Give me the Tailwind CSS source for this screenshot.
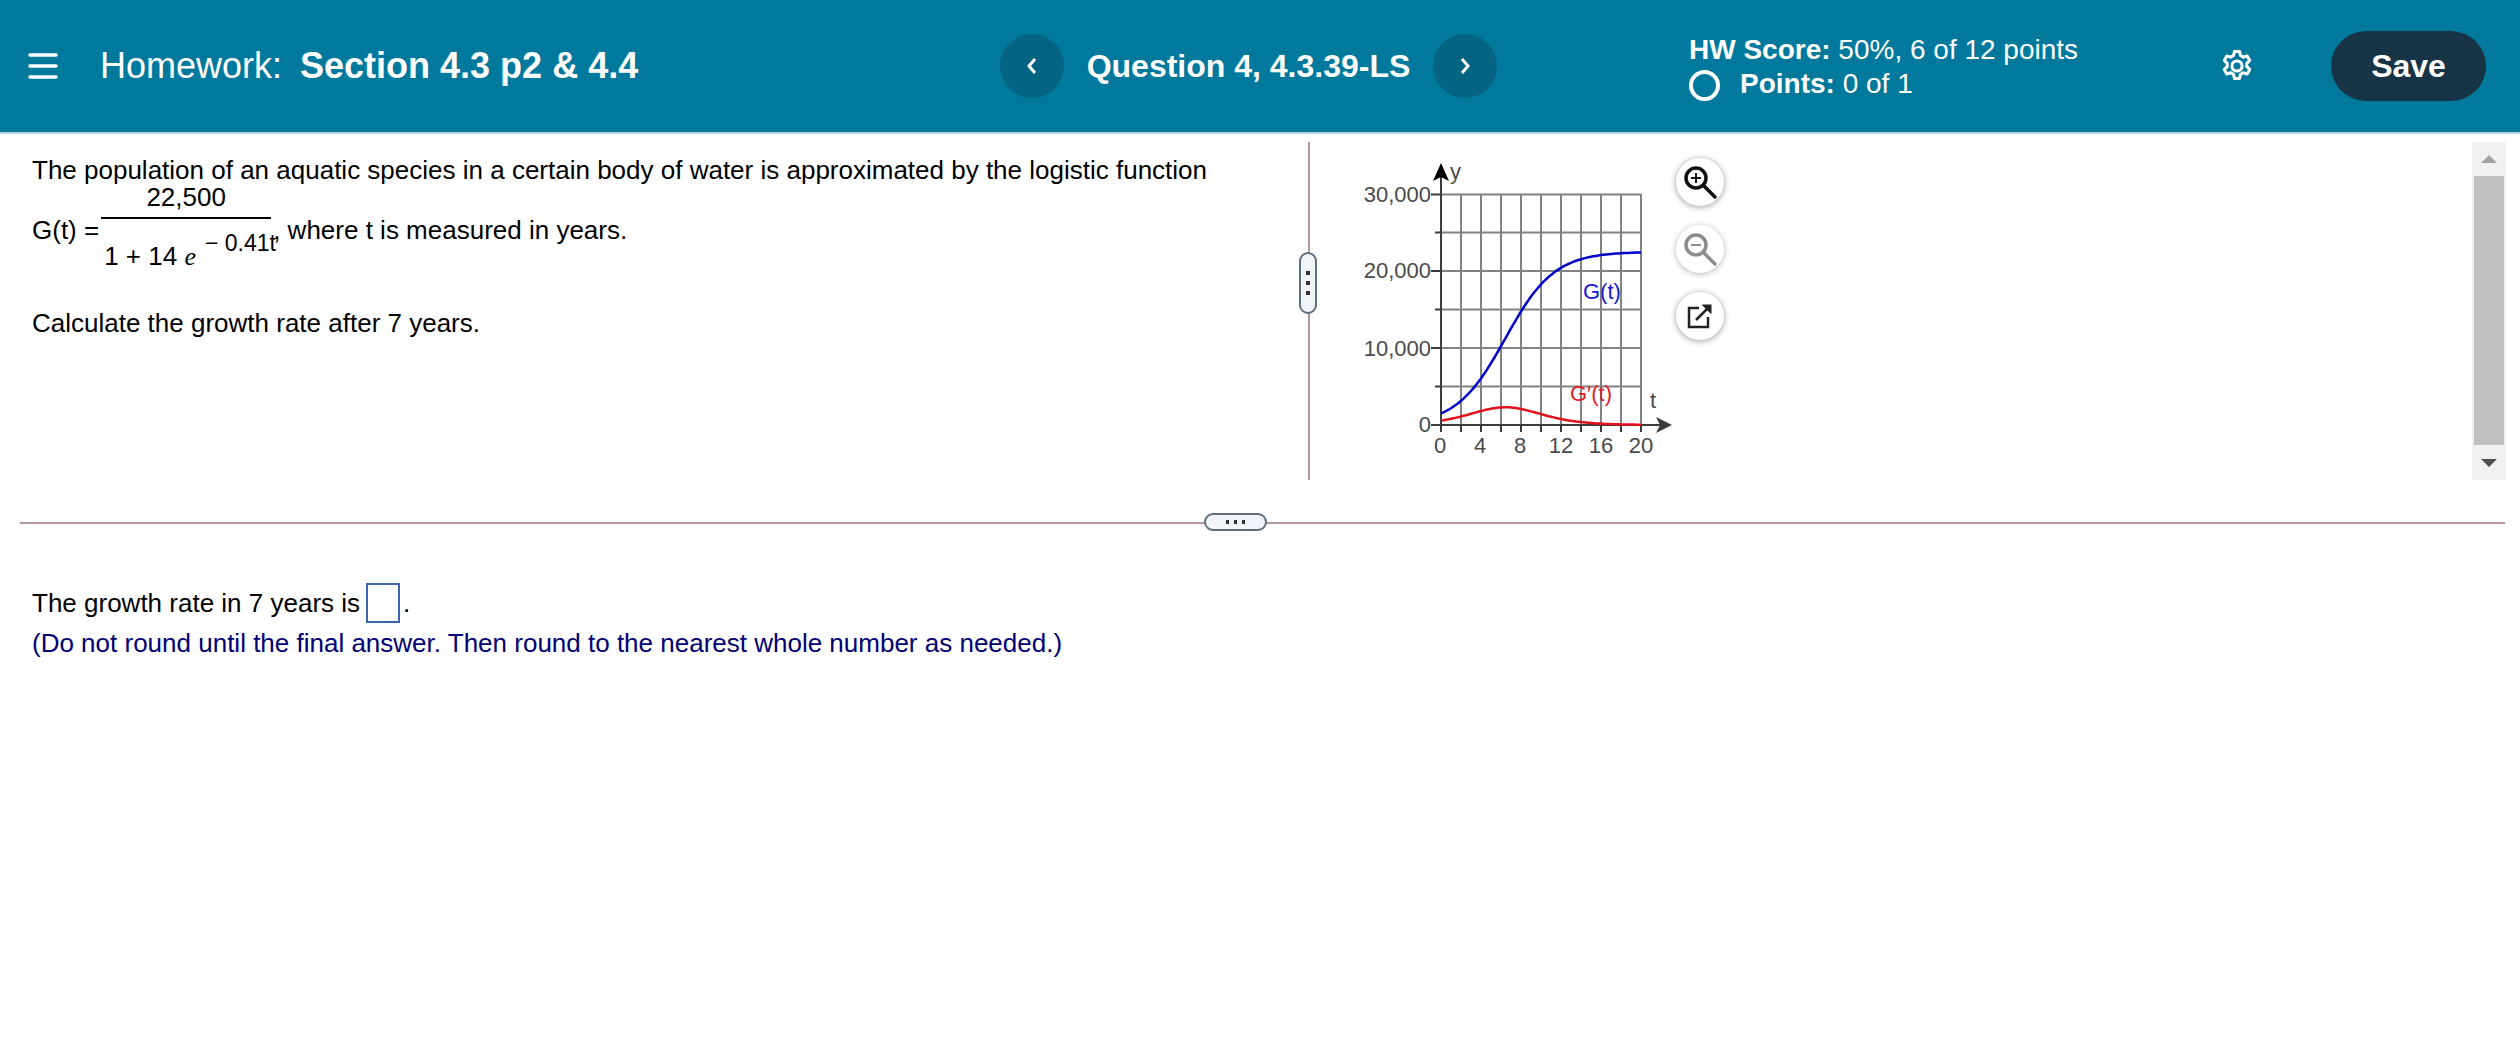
<!DOCTYPE html>
<html lang="en">
<head>
  <meta charset="UTF-8" />
  <title>Homework: Section 4.3 p2 &amp; 4.4</title>
  <script src="https://cdn.jsdelivr.net/npm/@tailwindcss/browser@4"></script>
</head>
<body class="bg-white text-black font-['Liberation_Sans',Arial,sans-serif] text-[26px] overflow-hidden">

  <!-- Top bar -->
  <header class="h-[134px] bg-[#00799c] border-b-2 border-[#b5d3df] text-white flex items-center">
    <svg class="w-[30px] h-[26px] ml-[28px]" viewBox="0 0 30 26" fill="none" stroke="#fff" stroke-width="3.5" stroke-linecap="round">
      <path d="M2 2h26M2 13h26M2 24h26" />
    </svg>
    <div class="ml-[42px] w-[900px] text-[36px] whitespace-nowrap">Homework:<span class="font-bold ml-[18px]">Section 4.3 p2 &amp; 4.4</span></div>

    <button class="w-[64px] h-[64px] rounded-full bg-[#056482] flex items-center justify-center">
      <svg class="w-[12px] h-[20px]" viewBox="0 0 12 20" fill="none" stroke="#fff" stroke-width="3"><path d="M9 3L3 10l6 7" /></svg>
    </button>
    <div class="w-[369px] text-center text-[32px] font-bold whitespace-nowrap">Question 4, 4.3.39-LS</div>
    <button class="w-[64px] h-[64px] rounded-full bg-[#056482] flex items-center justify-center">
      <svg class="w-[12px] h-[20px]" viewBox="0 0 12 20" fill="none" stroke="#fff" stroke-width="3"><path d="M3 3l6 7-6 7" /></svg>
    </button>

    <div class="ml-[192px] w-[530px] text-[28px] leading-[34px] pt-[2px] whitespace-nowrap">
      <div><span class="font-bold">HW Score:</span> 50%, 6 of 12 points</div>
      <div class="flex items-center">
        <span class="w-[31px] h-[31px] rounded-full border-[4px] border-white mr-[20px] mt-[2px]"></span>
        <span><span class="font-bold">Points:</span> 0 of 1</span>
      </div>
    </div>

    <svg class="w-[36px] h-[36px]" viewBox="0 0 24 24" fill="none" stroke="#fff" stroke-width="2" stroke-linejoin="round">
      <path d="M10.3 2.3h3.4l.6 2.7 1.9 1.1 2.6-.8 1.7 3-2 1.9v2.2l2 1.9-1.7 3-2.6-.8-1.9 1.1-.6 2.7h-3.4l-.6-2.7-1.9-1.1-2.6.8-1.7-3 2-1.9v-2.2l-2-1.9 1.7-3 2.6.8 1.9-1.1z" />
      <circle cx="12" cy="12" r="3.4" />
    </svg>
    <button class="ml-[76px] w-[155px] h-[70px] rounded-[35px] bg-[#173447] text-[32px] font-bold">Save</button>
  </header>

  <!-- Question and graph -->
  <section class="flex h-[338px] mt-[8px]">
    <div class="w-[1308px] pl-[32px] pt-[10px] shrink-0">
      <p class="leading-[36px]">The population of an aquatic species in a certain body of water is approximated by the logistic function</p>
      <div class="flex items-center h-[88px] mt-[-2px] whitespace-nowrap">
        <span>G(t) =</span>
        <span class="inline-flex flex-col items-center w-[170px] ml-[2px]">
          <span class="leading-[36px] pb-[2px]">22,500</span>
          <span class="w-full h-[2px] bg-black"></span>
          <span class="leading-[48px] w-full pl-[3px]">1 + 14 <i class="font-['Liberation_Serif',serif]">e</i><span class="text-[23px] ml-[9px] align-[14px]">− 0.41t</span></span>
        </span>
        <span class="ml-[2px]">, where t is measured in years.</span>
      </div>
      <p class="leading-[36px] mt-[31px]">Calculate the growth rate after 7 years.</p>
    </div>

    <!-- Vertical splitter -->
    <div class="relative w-[2px] bg-[#b795a4] shrink-0">
      <div class="absolute left-[-9px] top-[110px] w-[18px] h-[62px] rounded-[9px] border-2 border-[#5f6f7f] bg-[#f1f4f8] flex flex-col items-center justify-center gap-[6px]">
        <span class="w-[4px] h-[4px] bg-[#333]"></span>
        <span class="w-[4px] h-[4px] bg-[#333]"></span>
        <span class="w-[4px] h-[4px] bg-[#333]"></span>
      </div>
    </div>

    <!-- Graph -->
    <svg class="ml-[40px] mt-[8px] shrink-0" width="330" height="310" viewBox="0 0 330 310" font-family="Liberation Sans, Arial, sans-serif" font-size="22" fill="#4a4a4a">
      <g id="grid" stroke="#828282" stroke-width="2" fill="none">
        <path d="M111 44V275M131 44V275M151 44V275M171 44V275M191 44V275M211 44V275M231 44V275M251 44V275M271 44V275M291 44V275" />
        <path d="M91 44.5H291M91 82.5H291M91 121H291M91 159.5H291M91 198H291M91 236.5H291" />
      </g>
      <g stroke="#3c3c3c" stroke-width="2" fill="none">
        <path d="M91 24V282M81 44.5H91M85 82.5H91M81 121H91M85 159.5H91M81 198H91M85 236.5H91M81 275H314" />
        <path d="M111 275v7M131 275v7M151 275v7M171 275v7M191 275v7M211 275v7M231 275v7M251 275v7M271 275v7M291 275v7" />
      </g>
      <path d="M91 13L99 31L91 27L83 31Z" fill="#000" />
      <path d="M322 275L306 267L310 275L306 283Z" fill="#3c3c3c" />
      <path id="g-curve" fill="none" stroke="#0000c8" stroke-width="2.5" />
      <path id="gp-curve" fill="none" stroke="#e0101c" stroke-width="2.5" />
      <text x="100" y="29">y</text>
      <text x="300" y="258">t</text>
      <text x="233" y="149" fill="#1a1ad0">G(t)</text>
      <text x="220" y="251" fill="#e0202a">G′(t)</text>
      <g text-anchor="end">
        <text x="81" y="52">30,000</text>
        <text x="81" y="128">20,000</text>
        <text x="81" y="206">10,000</text>
        <text x="81" y="282">0</text>
      </g>
      <g text-anchor="middle">
        <text x="90" y="303">0</text>
        <text x="130" y="303">4</text>
        <text x="170" y="303">8</text>
        <text x="211" y="303">12</text>
        <text x="251" y="303">16</text>
        <text x="291" y="303">20</text>
      </g>
    </svg>

    <!-- Graph tools -->
    <div class="ml-[-4px] mt-[16px] flex flex-col gap-[19px] shrink-0">
      <button class="w-[48px] h-[48px] rounded-full bg-white shadow-[0_1px_6px_rgba(0,0,0,0.4)] flex items-center justify-center">
        <svg class="w-[36px] h-[36px]" viewBox="0 0 36 36" fill="none" stroke="#111" stroke-width="3.5">
          <circle cx="14" cy="14" r="10" /><path d="M22 22l11 11" stroke-linecap="round" /><path d="M9 14h10M14 9v10" stroke-width="2" />
        </svg>
      </button>
      <button class="w-[48px] h-[48px] rounded-full bg-white shadow-[0_1px_6px_rgba(0,0,0,0.3)] flex items-center justify-center">
        <svg class="w-[36px] h-[36px]" viewBox="0 0 36 36" fill="none" stroke="#8c8c8c" stroke-width="3.5">
          <circle cx="14" cy="14" r="10" /><path d="M22 22l11 11" stroke-linecap="round" /><path d="M9 14h10" stroke-width="2" />
        </svg>
      </button>
      <button class="w-[48px] h-[48px] rounded-full bg-white shadow-[0_1px_6px_rgba(0,0,0,0.4)] flex items-center justify-center">
        <svg class="w-[26px] h-[26px]" viewBox="0 0 26 26" fill="none" stroke="#222" stroke-width="2.5">
          <path d="M12 5H2v19h19V14" /><path d="M9 17L22 4" /><path d="M15 2h9v9" fill="#222" stroke="none" />
          <path d="M15 1.5h9.5V11z" fill="#222" stroke="none" />
        </svg>
      </button>
    </div>

    <!-- Scrollbar -->
    <div class="ml-auto mr-[14px] w-[34px] bg-[#f1f1f1] flex flex-col items-center shrink-0">
      <div class="h-[34px] flex items-center justify-center">
        <span class="w-0 h-0 border-x-[8px] border-x-transparent border-b-[8px] border-b-[#a3a3a3]"></span>
      </div>
      <div class="w-[30px] flex-1 bg-[#c1c1c1]"></div>
      <div class="h-[35px] flex items-center justify-center">
        <span class="w-0 h-0 border-x-[8px] border-x-transparent border-t-[8px] border-t-[#505050]"></span>
      </div>
    </div>
  </section>

  <!-- Horizontal splitter -->
  <div class="relative h-[2px] ml-[20px] mr-[15px] mt-[42px] bg-[#b795a4]">
    <div class="absolute left-[1184px] top-[-9px] w-[63px] h-[18px] rounded-[9px] border-2 border-[#5f6f7f] bg-[#f1f4f8] flex items-center justify-center gap-[5px]">
      <span class="w-[3px] h-[4px] bg-[#333]"></span>
      <span class="w-[3px] h-[4px] bg-[#333]"></span>
      <span class="w-[3px] h-[4px] bg-[#333]"></span>
    </div>
  </div>

  <!-- Answer -->
  <section class="pl-[32px] pt-[59px]">
    <p class="flex items-center h-[40px]">The growth rate in 7 years is<span class="w-[34px] h-[40px] border-2 border-[#3b66ad] ml-[6px] mr-[3px]"></span>.</p>
    <p class="mt-[2px] leading-[36px] text-[#000073]">(Do not round until the final answer. Then round to the nearest whole number as needed.)</p>
  </section>

  <script>
    // G(t) = 22500 / (1 + 14 e^(-0.41t)) on the graph's scale
    const sx = t => 91 + t * 10;
    const sy = v => 275 - v * 231 / 30000;
    let g = '', gp = '';
    for (let t = 0; t <= 20; t += 0.25) {
      const val = 22500 / (1 + 14 * Math.exp(-0.41 * t));
      const rate = 0.41 * val * (1 - val / 22500);
      g += (t ? 'L' : 'M') + sx(t) + ' ' + sy(val).toFixed(1);
      gp += (t ? 'L' : 'M') + sx(t) + ' ' + sy(rate).toFixed(1);
    }
    document.getElementById('g-curve').setAttribute('d', g);
    document.getElementById('gp-curve').setAttribute('d', gp);
  </script>
</body>
</html>
